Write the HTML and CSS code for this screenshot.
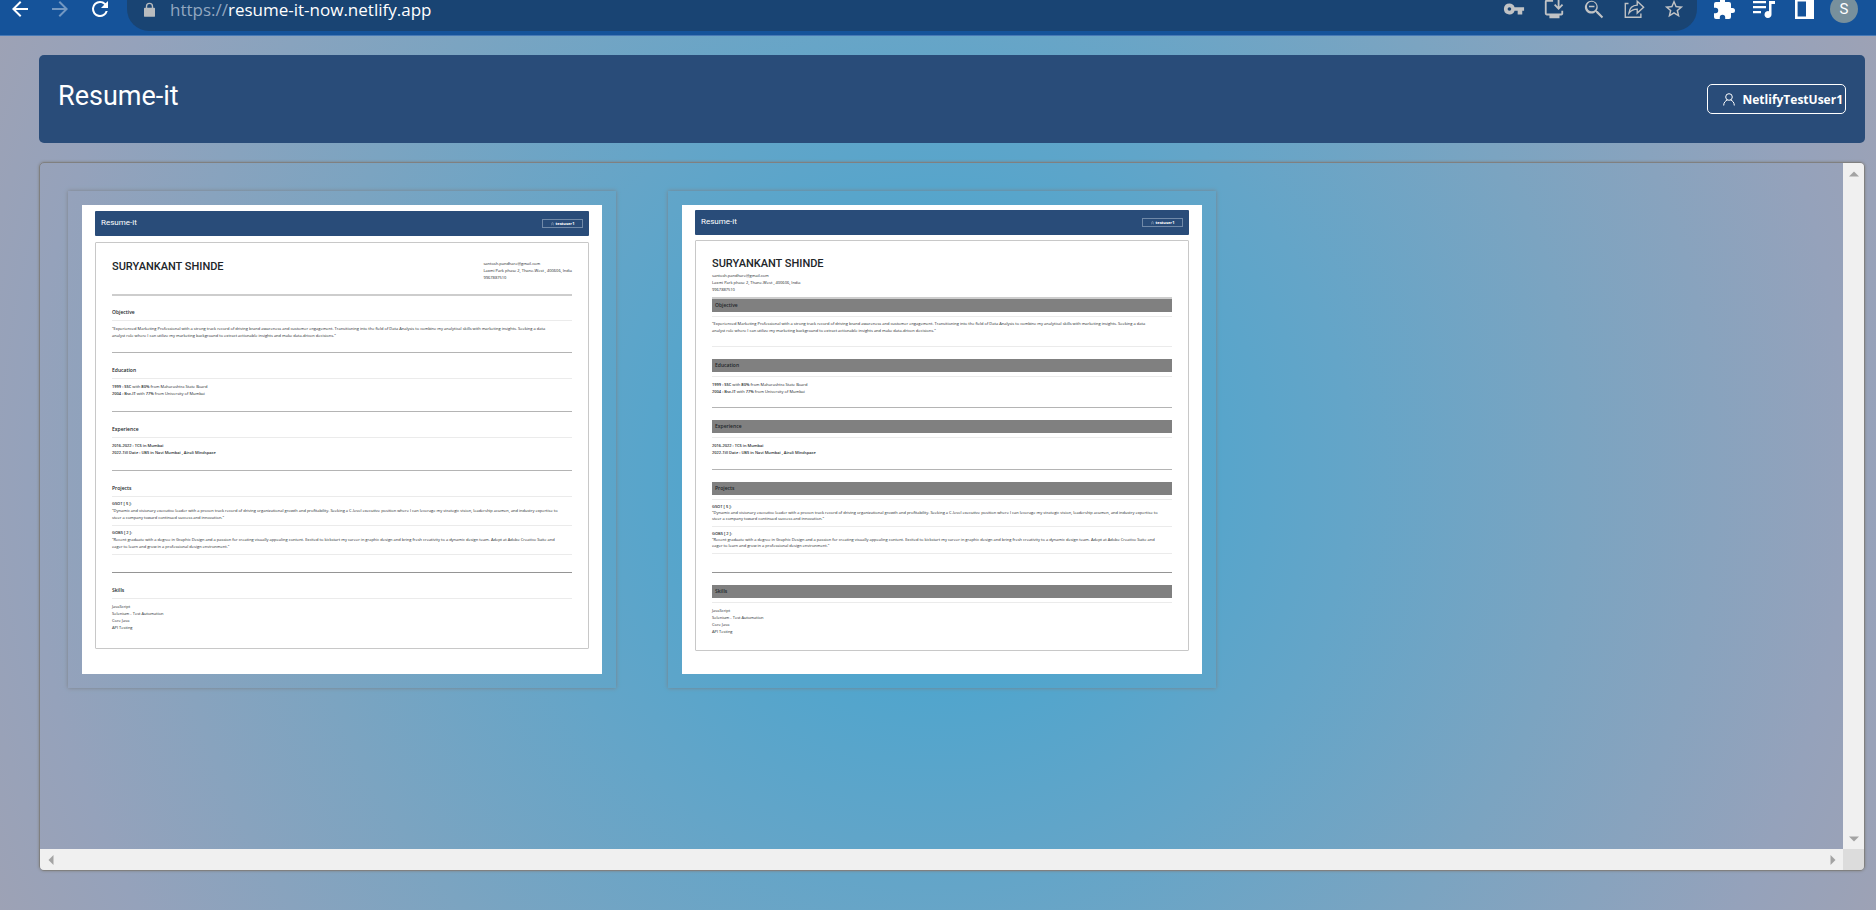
FILE: index.html
```html
<!DOCTYPE html>
<html lang="en">
<head>
<meta charset="utf-8">
<title>Resume-it</title>
<link rel="stylesheet" href="styles.css">
</head>
<body>
<div class="toolbar">
  <button class="tool" aria-label="Back"><svg viewBox="0 0 24 24"><path d="M20 11H7.830l5.590-5.590L12 4l-8 8 8 8 1.410-1.410L7.830 13H20z"/></svg></button>
  <button class="tool faded" aria-label="Forward"><svg viewBox="0 0 24 24"><path d="M12 4l-1.410 1.410L16.170 11H4v2h12.170l-5.580 5.590L12 20l8-8z"/></svg></button>
  <button class="tool" aria-label="Reload"><svg viewBox="0 0 24 24"><path d="M17.650 6.350A7.960 7.960 0 0 0 12 4a8 8 0 1 0 7.730 10h-2.080A6 6 0 1 1 12 6c1.660 0 3.140.690 4.220 1.780L13 11h7V4z"/></svg></button>
  <div class="address">
    <svg class="lock" viewBox="0 0 12 16"><path d="M2 6V4.500a4 4 0 0 1 8 0V6h1a1 1 0 0 1 1 1v8a1 1 0 0 1-1 1H1a1 1 0 0 1-1-1V7a1 1 0 0 1 1-1zm1.500 0h5V4.500a2.500 2.500 0 0 0-5 0z"/></svg>
    <span class="url"><span class="scheme">https://</span>resume-it-now.netlify.app</span>
    <button class="tool" aria-label="Passwords"><svg viewBox="0 0 24 24"><path d="M12.650 10A6 6 0 0 0 7 6a6 6 0 1 0 5.650 8H16v4h5v-4h2v-4zM7 14a2 2 0 1 1 0-4 2 2 0 0 1 0 4z"/></svg></button>
    <button class="tool" aria-label="Install"><svg viewBox="0 0 24 24"><path d="M11 2v2H4v13h16v-3h2v3.500a2 2 0 0 1-2 1.500h-2v3H7v-3H4a2 2 0 0 1-2-2V4a2 2 0 0 1 2-2zM16 2h2v7.200l2.600-2.600L22 8l-5 5-5-5 1.400-1.400L16 9.200z"/></svg></button>
    <button class="tool" aria-label="Zoom out"><svg viewBox="0 0 24 24"><path d="M16 14.200h-.800l-.300-.300A7 7 0 1 0 14 15l.300.300v.800L20.500 22 22 20.500zM9.500 14.500a5.200 5.200 0 1 1 0-10.400 5.200 5.200 0 0 1 0 10.400zM6.500 8.500h6v1.600h-6z"/></svg></button>
    <button class="tool" aria-label="Share"><svg viewBox="0 0 24 24"><path class="line" d="M6 6H2.500v15h17V17M6.500 16.500c.500-5 3.500-8.500 9-8.700V3.500l7 6.500-7 6.500v-4.300c-4 0-6.500 1.300-9 4.300z"/></svg></button>
    <button class="tool" aria-label="Bookmark"><svg viewBox="0 0 24 24"><path d="M22 9.240l-7.190-.620L12 2 9.190 8.630 2 9.240l5.460 4.730L5.820 21 12 17.270 18.180 21l-1.630-7.030zM12 15.400l-3.760 2.270 1-4.280-3.320-2.880 4.380-.380L12 6.100l1.710 4.040 4.380.380-3.320 2.880 1 4.280z"/></svg></button>
  </div>
  <button class="tool" aria-label="Extensions"><svg viewBox="0 0 24 24"><path d="M20.500 11H19V7a2 2 0 0 0-2-2h-4V3.500a2.500 2.500 0 0 0-5 0V5H4a2 2 0 0 0-2 2v3.800h1.500a2.700 2.700 0 0 1 0 5.400H2V20a2 2 0 0 0 2 2h3.800v-1.500a2.700 2.700 0 0 1 5.400 0V22H17a2 2 0 0 0 2-2v-4h1.500a2.500 2.500 0 0 0 0-5z"/></svg></button>
  <button class="tool" aria-label="Media"><svg viewBox="0 0 24 24"><path d="M1 4h13v2.300H1zM1 9h13v2.300H1zM1 14h8v2.300H1zM17 4h6v3h-3.500v10.500a3.500 3.500 0 1 1-2.500-3.300z"/></svg></button>
  <button class="tool" aria-label="Side panel"><svg viewBox="0 0 24 24"><path fill-rule="evenodd" d="M3 2h19v20H3zM5.600 4.600v14.800h8.400V4.600z"/></svg></button>
  <button class="tool" aria-label="Profile"><span class="avatar">S</span></button>
</div>

<div class="page">
  <header class="banner">
    <h1 class="brand">Resume-it</h1>
    <button class="user"><svg viewBox="0 0 12 13"><circle cx="6" cy="4" r="3.300"/><path d="M.700 12.500C.700 9.500 2.500 7.500 4.500 7M11.300 12.500C11.300 9.500 9.500 7.500 7.500 7"/></svg>NetlifyTestUser1</button>
  </header>

  <main class="panel">
    <div class="gallery">
      <article class="card">
        <div class="sheet plain">
          <div class="mini-bar"><span class="mini-brand">Resume-it</span><span class="mini-user"><svg viewBox="0 0 12 13"><circle cx="6" cy="4" r="3.300"/><path d="M.700 12.500C.700 9.500 2.500 7.500 4.500 7M11.300 12.500C11.300 9.500 9.500 7.500 7.500 7"/></svg>testuser1</span></div>
          <div class="resume">
            <div class="head">
              <h2 class="name">SURYANKANT SHINDE</h2>
              <address class="contact">santosh.pandhare@gmail.com<br>Laxmi Park phase 2, Thane-West , 400606, India<br>9967887510</address>
            </div>
            <section class="part first">
              <h3 class="title">Objective</h3>
              <p class="text">"Experienced Marketing Professional with a strong track record of driving brand awareness and customer engagement. Transitioning into the field of Data Analysis to combine my analytical skills with marketing insights. Seeking a data<br>analyst role where I can utilize my marketing background to extract actionable insights and make data-driven decisions."</p>
            </section>
            <section class="part">
              <h3 class="title">Education</h3>
              <p class="text"><b>1999 : SSC</b> with <b>80%</b> from Maharashtra State Board<br><b>2004 : Bsc-IT</b> with <b>77%</b> from University of Mumbai</p>
            </section>
            <section class="part">
              <h3 class="title">Experience</h3>
              <p class="text"><b>2016-2022 : TCS in Mumbai<br>2022-Till Date : UBS in Navi Mumbai , Airoli Mindspace</b></p>
            </section>
            <section class="part projects">
              <h3 class="title">Projects</h3>
              <div class="entry"><b>GSOT [ 5 ]:</b><p>"Dynamic and visionary executive leader with a proven track record of driving organizational growth and profitability. Seeking a C-level executive position where I can leverage my strategic vision, leadership acumen, and industry expertise to<br>steer a company toward continued success and innovation."</p></div>
              <div class="entry"><b>GOBS [ 2 ]:</b><p>"Recent graduate with a degree in Graphic Design and a passion for creating visually appealing content. Excited to kickstart my career in graphic design and bring fresh creativity to a dynamic design team. Adept at Adobe Creative Suite and<br>eager to learn and grow in a professional design environment."</p></div>
            </section>
            <section class="part dark">
              <h3 class="title">Skills</h3>
              <p class="text">JavaScript<br>Selenium - Test Automation<br>Core Java<br>API Testing</p>
            </section>
          </div>
        </div>
      </article>

      <article class="card">
        <div class="sheet banded">
          <div class="mini-bar"><span class="mini-brand">Resume-it</span><span class="mini-user"><svg viewBox="0 0 12 13"><circle cx="6" cy="4" r="3.300"/><path d="M.700 12.500C.700 9.500 2.500 7.500 4.500 7M11.300 12.500C11.300 9.500 9.500 7.500 7.500 7"/></svg>testuser1</span></div>
          <div class="resume">
            <div class="head">
              <h2 class="name">SURYANKANT SHINDE</h2>
              <address class="contact">santosh.pandhare@gmail.com<br>Laxmi Park phase 2, Thane-West , 400606, India<br>9967887510</address>
            </div>
            <section class="part first">
              <h3 class="title">Objective</h3>
              <p class="text">"Experienced Marketing Professional with a strong track record of driving brand awareness and customer engagement. Transitioning into the field of Data Analysis to combine my analytical skills with marketing insights. Seeking a data<br>analyst role where I can utilize my marketing background to extract actionable insights and make data-driven decisions."</p>
            </section>
            <section class="part faint">
              <h3 class="title">Education</h3>
              <p class="text"><b>1999 : SSC</b> with <b>80%</b> from Maharashtra State Board<br><b>2004 : Bsc-IT</b> with <b>77%</b> from University of Mumbai</p>
            </section>
            <section class="part">
              <h3 class="title">Experience</h3>
              <p class="text"><b>2016-2022 : TCS in Mumbai<br>2022-Till Date : UBS in Navi Mumbai , Airoli Mindspace</b></p>
            </section>
            <section class="part projects">
              <h3 class="title">Projects</h3>
              <div class="entry"><b>GSOT [ 5 ]:</b><p>"Dynamic and visionary executive leader with a proven track record of driving organizational growth and profitability. Seeking a C-level executive position where I can leverage my strategic vision, leadership acumen, and industry expertise to<br>steer a company toward continued success and innovation."</p></div>
              <div class="entry"><b>GOBS [ 2 ]:</b><p>"Recent graduate with a degree in Graphic Design and a passion for creating visually appealing content. Excited to kickstart my career in graphic design and bring fresh creativity to a dynamic design team. Adept at Adobe Creative Suite and<br>eager to learn and grow in a professional design environment."</p></div>
            </section>
            <section class="part dark">
              <h3 class="title">Skills</h3>
              <p class="text">JavaScript<br>Selenium - Test Automation<br>Core Java<br>API Testing</p>
            </section>
          </div>
        </div>
      </article>
    </div>
    <div class="track vertical">
      <button class="step" aria-label="Scroll up"><svg viewBox="0 0 10 10"><path d="M0 7.500h10L5 2.500z"/></svg></button>
      <button class="step" aria-label="Scroll down"><svg viewBox="0 0 10 10"><path d="M0 2.500h10L5 7.500z"/></svg></button>
    </div>
    <div class="track">
      <button class="step" aria-label="Scroll left"><svg viewBox="0 0 10 10"><path d="M7.500 0v10L2.500 5z"/></svg></button>
      <button class="step" aria-label="Scroll right"><svg viewBox="0 0 10 10"><path d="M2.500 0v10L7.500 5z"/></svg></button>
    </div>
    <div class="corner"></div>
  </main>
</div>
</body>
</html>
```

FILE: styles.css
```css
* {
  box-sizing: border-box;
}

body {
  margin: 0;
  min-height: 100vh;
  display: flex;
  flex-direction: column;
  font-family: Roboto, "Liberation Sans", sans-serif;
  color: #212529;
}

h1, h2, h3, p {
  margin: 0;
}

button {
  border: 0;
  padding: 0;
  background: none;
  color: inherit;
  font: inherit;
}

/* Browser toolbar */
.toolbar {
  display: flex;
  height: 36px;
  padding-right: 12px;
  background: #15539a;
  border-bottom: 1px solid #4779b5;
  color: #fff;
}

.tool {
  flex: none;
  display: flex;
  align-items: center;
  justify-content: center;
  width: 40px;
  height: 17px;
}

.tool svg {
  flex: none;
  width: 24px;
  height: 24px;
  fill: currentColor;
}

.faded {
  color: #7398c2;
}

.address {
  flex: 1;
  display: flex;
  height: 31px;
  margin: 0 7px;
  padding: 0 3px 0 17px;
  border-radius: 0 0 22px 22px;
  background: #194473;
  color: #c1c3c5;
}

.address .tool svg {
  width: 22px;
  height: 22px;
}

.tool .line {
  fill: none;
  stroke: currentColor;
  stroke-width: 1.5;
}

.lock {
  width: 11px;
  height: 17px;
  padding-top: 2px;
  fill: #b9bcbf;
}

.url {
  flex: 1;
  margin-left: 15px;
  font-family: "Open Sans", "Noto Sans", sans-serif;
  font-size: 17px;
  line-height: 22px;
  margin-top: -1px;
  color: #fff;
}

.scheme {
  color: #92a7c0;
}

.avatar {
  flex: none;
  width: 28px;
  height: 28px;
  border-radius: 50%;
  background: #78909c;
  font-size: 15px;
  line-height: 28px;
  text-align: center;
}

/* Application page */
.page {
  flex: 1;
  display: flex;
  flex-direction: column;
  gap: 19px;
  padding: 19px 11px 39px 39px;
  background: radial-gradient(circle, #4da6ce, #50a5cd 20%, #64a5c8 40%, #7ba4c1 62%, #95a2bb 88%, #9da2b5);
}

.banner {
  display: flex;
  justify-content: space-between;
  align-items: flex-end;
  padding: 24px 19px 29px;
  border-radius: 5px;
  background: #294c79;
  color: #fff;
}

.brand {
  font-size: 27px;
  font-weight: 400;
  line-height: 35px;
}

.user {
  display: flex;
  align-items: center;
  gap: 8px;
  height: 30px;
  padding: 0 2px 0 15px;
  border: 1px solid #fff;
  border-radius: 5px;
  font-family: "Open Sans", "Noto Sans", sans-serif;
  font-size: 12px;
  font-weight: 700;
}

.user svg {
  width: 12px;
  height: 13px;
}

.user svg, .mini-user svg {
  fill: none;
  stroke: currentColor;
  stroke-width: 1;
}

.panel {
  flex: 1;
  display: grid;
  grid-template-columns: 1fr 21px;
  grid-template-rows: 1fr 21px;
  border: 1px solid #808080;
  border-radius: 5px;
  box-shadow: 0 0 3px #808080;
  overflow: hidden;
}

.gallery {
  display: flex;
  align-items: flex-start;
  gap: 52px;
  padding: 28px;
}

.card {
  flex: 0 0 548px;
  padding: 14px;
  box-shadow: 0 0 4px #7c8085;
}

.track {
  display: flex;
  justify-content: space-between;
  background: #f0f0f0;
}

.vertical {
  flex-direction: column;
}

.step {
  display: grid;
  place-items: center;
  width: 21px;
  height: 21px;
}

.step svg {
  width: 10px;
  height: 10px;
  fill: #a3a3a3;
}

.corner {
  background: #dcdcdc;
}

/* Resume preview */
.sheet {
  padding: 6px 13px 25px;
  background: #fff;
  font-family: "Open Sans", Roboto, sans-serif;
  font-size: 4px;
  line-height: 7px;
  white-space: nowrap;
}

.sheet b {
  font-weight: 600;
}

.mini-bar {
  display: flex;
  justify-content: space-between;
  align-items: center;
  height: 25px;
  margin-bottom: 6px;
  padding: 0 6px;
  border-radius: 1px;
  background: #294c79;
  color: #fff;
}

.mini-brand {
  font-family: Roboto, sans-serif;
  font-size: 8px;
  line-height: 12px;
  padding-bottom: 2px;
}

.mini-user {
  display: flex;
  align-items: center;
  justify-content: center;
  gap: 2px;
  width: 41px;
  height: 9px;
  border: 1px solid #7089a8;
  font-weight: 700;
}

.mini-user svg {
  width: 3px;
  height: 4px;
}

.resume {
  padding: 17px 16px;
  border: 1px solid #c8c8c8;
  border-radius: 1px;
}

.head {
  display: flex;
  justify-content: space-between;
  align-items: flex-start;
  min-height: 51px;
}

.name {
  font-family: Roboto, sans-serif;
  font-size: 11px;
  font-weight: 500;
  line-height: 13px;
}

.contact {
  font-style: normal;
}

.plain .resume {
  padding-top: 0;
}

.plain .head {
  padding-top: 17px;
}

.part {
  padding-top: 11px;
  border-top: 1px solid #b4b4b4;
}

.first {
  padding-top: 10px;
  border-top: 2px solid #cdcdcd;
}

.dark {
  border-top-color: #959595;
}

.title {
  padding-bottom: 2px;
  border-bottom: 1px solid #ebebeb;
  font-size: 5px;
  font-weight: 600;
  line-height: 12px;
}

.text {
  padding: 4px 0 14px;
}

.first .text {
  padding-bottom: 13px;
}

.dark .text {
  padding-bottom: 0;
}

.projects {
  padding-bottom: 17px;
}

.entry {
  padding: 3px 0 4px;
  border-bottom: 1px solid #ebebeb;
}

.entry b {
  display: block;
}

/* Preview variant with grey section bands */
.banded {
  padding-top: 5px;
  padding-bottom: 23px;
}

.banded .mini-bar {
  margin-bottom: 5px;
}

.banded .resume {
  padding: 16px 16px 15px;
}

.banded .head {
  display: block;
  min-height: 0;
  padding: 0 0 4px;
}

.banded .contact {
  margin-top: 2px;
}

.banded .part {
  padding-top: 12px;
}

.banded .first {
  padding-top: 0;
}

.banded .faint {
  border-top-color: #ebebeb;
}

.banded .title {
  display: flex;
  flex-direction: column;
  gap: 4px;
  padding: 0;
  border: 0;
  background: linear-gradient(#808080 13px, #fff 13px);
  line-height: 13px;
  text-indent: 3px;
}

.banded .title::after {
  content: "";
  border-bottom: 1px solid #ebebeb;
}

.banded .text {
  padding-bottom: 13px;
}

.banded .faint .text {
  padding-bottom: 12px;
}

.banded .first .text {
  padding: 3px 0 12px;
}

.banded .dark .text {
  padding-bottom: 0;
}

.banded .projects {
  padding-bottom: 18px;
}

.banded .entry p {
  line-height: 6px;
}
```
